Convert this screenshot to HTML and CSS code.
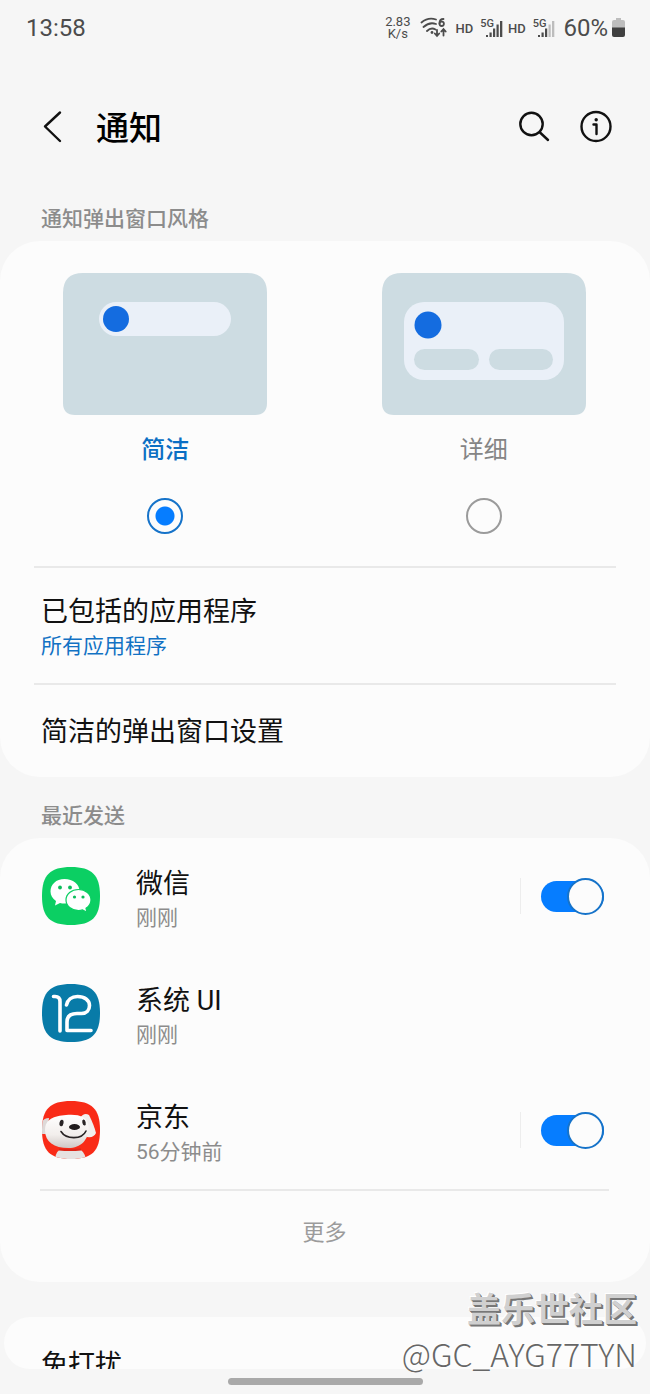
FILE: index.html
```html
<!DOCTYPE html>
<html lang="zh-CN">

<head>
	<meta charset="UTF-8">
	<meta name="viewport" content="width=device-width, initial-scale=1.0">
	<title>通知</title>
	<link rel="stylesheet" href="styles.css">
</head>

<body>
	<div class="screen">
		<div class="status-bar">
			<span class="clock">13:58</span>
			<div class="status-icons">
				<div class="net-speed">
					<span>2.83</span>
					<span>K/s</span>
				</div>
				<svg class="wifi" width="27" height="22" viewBox="0 0 27 22" fill="none" stroke="#4c4c4c" stroke-width="1.800" stroke-linecap="round">
					<path d="M1.500 5.500Q8 0 16 2.500M3.500 10Q9.500 4.500 16 7M7 14Q11 10 15.500 12.500" />
					<circle cx="12" cy="15.500" r="1.400" fill="#4c4c4c" stroke="none" />
					<path d="M23.500 2Q19.500 2 19.500 6.500" />
					<circle cx="21.700" cy="6.800" r="2.200" />
					<path d="M17 13v5.500M14.800 16.500l2.200 2.500 2.200-2.500M23.500 18.500v-6M21.300 14.500l2.200-2.500 2.200 2.500" />
				</svg>
				<span class="hd">HD</span>
				<span class="signal">
					<span class="gen">5G</span>
					<svg width="18" height="18" viewBox="0 0 18 18" fill="#4c4c4c">
						<path d="M1 15h2v2H1zM4.500 12.500h2.200V17H4.500zM8 8.500h2.200V17H8zM11.500 4.500h2.200V17h-2.200zM15 1h2.300v16H15z" />
					</svg>
				</span>
				<span class="hd">HD</span>
				<span class="signal">
					<span class="gen">5G</span>
					<svg width="18" height="18" viewBox="0 0 18 18" fill="#4c4c4c">
						<path d="M1 15h2v2H1zM4.500 12.500h2.200V17H4.500zM8 8.500h2.200V17H8z" />
						<path d="M11.500 4.500h2.200V17h-2.200zM15 1h2.300v16H15z" fill="#bdbdbd" />
					</svg>
				</span>
				<span class="percent">60%</span>
				<svg class="battery" width="13" height="20" viewBox="0 0 13 20">
					<path d="M4 0h5v2h2q2 0 2 2v6H0V4q0-2 2-2h2z" fill="#bdbdbd" />
					<path d="M0 9.500h13V17q0 2-2 2H2q-2 0-2-2z" fill="#404040" />
				</svg>
			</div>
		</div>

		<header class="header">
			<button class="icon-btn" type="button" aria-label="返回">
				<svg width="36" height="36" viewBox="0 0 36 36" fill="none" stroke="#111" stroke-width="2.400" stroke-linecap="round" stroke-linejoin="round">
					<path d="M25 3.500L10 17.500 25 32" />
				</svg>
			</button>
			<h1>通知</h1>
			<div class="actions">
				<button class="icon-btn" type="button" aria-label="搜索">
					<svg width="36" height="36" viewBox="0 0 36 36" fill="none" stroke="#111" stroke-width="2.400" stroke-linecap="round">
						<circle cx="15.500" cy="15" r="11.200" />
						<path d="M24 23.500l8 7.500" />
					</svg>
				</button>
				<button class="icon-btn" type="button" aria-label="信息">
					<svg width="36" height="36" viewBox="0 0 36 36" fill="none" stroke="#111" stroke-width="2.400" stroke-linecap="round">
						<circle cx="18" cy="17.500" r="14.500" />
						<path d="M15.500 15.500h3V25" stroke-linejoin="round" />
						<circle cx="18.200" cy="10.800" r="1.700" fill="#111" stroke="none" />
					</svg>
				</button>
			</div>
		</header>

		<main class="content">
			<h2 class="section-title">通知弹出窗口风格</h2>
			<section class="card">
				<div class="styles">
					<label class="style-option">
						<svg width="204" height="142" viewBox="0 0 204 142">
							<path d="M20 0H184Q204 0 204 20V130Q204 142 192 142H12Q0 142 0 130V20Q0 0 20 0Z" fill="#cddce2" />
							<rect x="36" y="29" width="132" height="34" rx="17" fill="#eaf0f8" />
							<circle cx="53" cy="46" r="13" fill="#146ce0" />
						</svg>
						<span class="style-name">简洁</span>
						<input type="radio" name="popup-style" checked>
					</label>
					<label class="style-option">
						<svg width="204" height="142" viewBox="0 0 204 142">
							<path d="M20 0H184Q204 0 204 20V130Q204 142 192 142H12Q0 142 0 130V20Q0 0 20 0Z" fill="#cddce2" />
							<rect x="22" y="29" width="160" height="78" rx="20" fill="#eaf0f8" />
							<circle cx="46" cy="52" r="13.500" fill="#146ce0" />
							<rect x="32" y="76" width="65" height="21" rx="10.500" fill="#cddce2" />
							<rect x="107" y="76" width="64" height="21" rx="10.500" fill="#cddce2" />
						</svg>
						<span class="style-name">详细</span>
						<input type="radio" name="popup-style">
					</label>
				</div>
				<a class="row" href="#">
					<span class="title">已包括的应用程序</span>
					<span class="sub link">所有应用程序</span>
				</a>
				<a class="row single" href="#">
					<span class="title">简洁的弹出窗口设置</span>
				</a>
			</section>

			<h2 class="section-title">最近发送</h2>
			<section class="card">
				<div class="app">
					<svg class="app-icon" width="58" height="58" viewBox="0 0 58 58">
						<path d="M29 0C50 0 58 8 58 29S50 58 29 58 0 50 0 29 8 0 29 0Z" fill="#0bcf63" />
						<path d="M22.500 12C14 12 8.500 17.500 8.500 24.500c0 4 2 7 5.500 9.500l-1 4.500 5-2.500q2 .5 4.500 .5C31 36.500 37.500 31 37.500 24S31 12 22.500 12Z" fill="#fff" />
						<path d="M36.500 22.500C29.500 22.500 24 27 24 33s5.500 10.500 12.500 10.500q2.200 0 4-.6l4.500 2.300-1-3.900c3-2 5-5 5-8.300 0-6-5.500-10.500-12.500-10.500Z" fill="#fff" stroke="#0bcf63" stroke-width="1.200" />
						<g fill="#0bbd5b">
							<circle cx="18" cy="20.500" r="1.900" />
							<circle cx="28" cy="20.500" r="1.900" />
							<circle cx="32.500" cy="30" r="1.600" />
							<circle cx="41" cy="30" r="1.600" />
						</g>
					</svg>
					<div class="app-text">
						<span class="title" id="app-wechat">微信</span>
						<span class="sub">刚刚</span>
					</div>
					<div class="toggle"><input type="checkbox" role="switch" aria-labelledby="app-wechat" checked></div>
				</div>
				<div class="app">
					<svg class="app-icon" width="58" height="58" viewBox="0 0 58 58">
						<path d="M29 0C50 0 58 8 58 29S50 58 29 58 0 50 0 29 8 0 29 0Z" fill="#087ba8" />
						<path d="M11.500 12.500H13q5 0 5 5V47M24.500 21c1-5 5-8.500 11-8.500 7 0 12 3.500 12 9 0 4.500-3 8-8 8H35c-7 0-10 3-10 8.500v8.500H49" fill="none" stroke="#fff" stroke-width="3.600" stroke-linecap="round" stroke-linejoin="round" />
					</svg>
					<div class="app-text">
						<span class="title">系统 UI</span>
						<span class="sub">刚刚</span>
					</div>
				</div>
				<div class="app">
					<svg class="app-icon" width="58" height="58" viewBox="0 0 58 58">
						<defs>
							<clipPath id="squircle">
								<path d="M29 0C50 0 58 8 58 29S50 58 29 58 0 50 0 29 8 0 29 0Z" />
							</clipPath>
							<linearGradient id="fur" x1="0" y1="0" x2="0" y2="1">
								<stop offset="0" stop-color="#fff" />
								<stop offset=".6" stop-color="#f2eeec" />
								<stop offset="1" stop-color="#cfc8c5" />
							</linearGradient>
						</defs>
						<g clip-path="url(#squircle)">
							<rect width="58" height="58" fill="#f92b17" />
							<path d="M13 58q1-9 7-10h16q6 1 8 10Z" fill="#e6e2e1" />
							<path d="M7 17Q0 17-1 25v8h6Z" fill="#ded9d8" />
							<path d="M38 17q4-6 9-3 5 10 7 18-2 5-9 4Z" fill="#f2efee" />
							<path d="M24 14C36 13 46 15 46.500 26c.5 13-8 21-20 21C12 47 3 41 3 29 3 18 12 15 24 14Z" fill="url(#fur)" />
							<path d="M17 48.500q11 1 22 0" fill="none" stroke="#dc2618" stroke-width="2" />
							<ellipse cx="19.500" cy="22" rx="2" ry="3.200" fill="#292425" transform="rotate(12 19.500 22)" />
							<ellipse cx="42" cy="21.500" rx="1.700" ry="3" fill="#292425" transform="rotate(-12 42 21.500)" />
							<ellipse cx="32.500" cy="26" rx="5.500" ry="3" fill="#211c1d" />
							<path d="M19 30.500c5 8 21 8.500 25-.5" fill="none" stroke="#292425" stroke-width="1.600" stroke-linecap="round" />
						</g>
					</svg>
					<div class="app-text">
						<span class="title" id="app-jd">京东</span>
						<span class="sub">56分钟前</span>
					</div>
					<div class="toggle"><input type="checkbox" role="switch" aria-labelledby="app-jd" checked></div>
				</div>
				<button class="more" type="button">更多</button>
			</section>

			<section class="card last">
				<a class="row dnd" href="#"><span class="title">免打扰</span></a>
			</section>
		</main>

		<div class="nav-bar"><span class="handle"></span></div>

		<div class="watermark">
			<span class="community">盖乐世社区</span>
			<span class="user">@GC_AYG77TYN</span>
		</div>
	</div>
</body>

</html>
```
FILE: styles.css
```css
* {
	box-sizing: border-box;
}

body {
	margin: 0;
	background-color: #f6f6f6;
	color: #111;
	font-family: Roboto, "Noto Sans CJK SC", sans-serif;
}

a {
	color: inherit;
	text-decoration: none;
}

button {
	background: none;
	border: none;
	padding: 0;
	font-family: inherit;
	cursor: pointer;
}

h1,
h2 {
	margin: 0;
}

.screen {
	position: relative;
	height: 100vh;
	display: flex;
	flex-direction: column;
	overflow: hidden;
}

/* status bar */
.status-bar {
	height: 56px;
	flex-shrink: 0;
	padding: 0 25px 0 26px;
	display: flex;
	align-items: center;
	justify-content: space-between;
	color: #4c4c4c;
}

.clock,
.percent {
	font-size: 24px;
}

.status-icons {
	display: flex;
	align-items: center;
}

.net-speed {
	display: flex;
	flex-direction: column;
	align-items: center;
	font-size: 13px;
	line-height: 12px;
}

.wifi {
	margin: 0 9px 0 9px;
}

.hd {
	font-size: 13px;
	font-weight: 500;
}

.signal {
	display: flex;
	align-items: flex-end;
	margin: 0 5px 0 7px;
}

.gen {
	font-size: 11px;
	font-weight: 500;
	line-height: 12px;
	align-self: flex-start;
	margin-right: -9px;
}

.signal svg {
	margin-top: 2px;
}

.percent {
	margin: 0 4px 0 3px;
}

/* title bar */
.header {
	flex-shrink: 0;
	padding: 45px 36px 27px 35px;
	display: flex;
	align-items: center;
}

.header h1 {
	margin-left: 25px;
	padding-top: 4px;
	font-size: 33px;
	font-weight: 500;
	line-height: 48px;
	color: #000;
}

.icon-btn {
	width: 36px;
	height: 36px;
}

.actions {
	margin-left: auto;
	display: flex;
	gap: 26px;
}

.content {
	flex: 1;
	min-height: 0;
	display: flex;
	flex-direction: column;
}

.section-title {
	padding: 24px 41px 7px;
	font-size: 21px;
	font-weight: 500;
	line-height: 30px;
	color: #8c8c8c;
}

.card {
	flex-shrink: 0;
	background-color: #fcfcfc;
	border-radius: 40px;
}

/* popup style picker */
.styles {
	display: grid;
	grid-template-columns: 1fr 1fr;
	padding: 32px 7px 32px 6px;
}

.style-option {
	display: flex;
	flex-direction: column;
	align-items: center;
	cursor: pointer;
}

.style-name {
	margin: 18px 0 31px;
	font-size: 24px;
	line-height: 34px;
	color: #858585;
}

.style-option:has(input:checked) .style-name {
	color: #0b6fc4;
	font-weight: 500;
}

input[type="radio"] {
	appearance: none;
	width: 36px;
	height: 36px;
	margin: 0;
	border: 2px solid #9b9b9b;
	border-radius: 50%;
}

input[type="radio"]:checked {
	border-color: #1673c9;
	background: radial-gradient(circle, #067dff 9px, transparent 10px);
}

/* list rows */
.row {
	display: flex;
	flex-direction: column;
	margin: 0 34px;
	padding: 26px 7px 21px;
	border-top: 2px solid #e9e9e9;
}

.row.single {
	padding-top: 29px;
	padding-bottom: 27px;
}

.title {
	font-size: 27px;
	line-height: 36px;
	color: #111;
}

.sub {
	font-size: 21px;
	line-height: 32px;
	color: #8c8c8c;
}

.sub.link {
	color: #1272c4;
}

/* recently sent */
.app {
	display: flex;
	align-items: center;
	padding: 20px 46px 21px 42px;
}

.app-text {
	display: flex;
	flex-direction: column;
	flex: 1;
	margin-left: 36px;
	padding-top: 8px;
}

.toggle {
	height: 36px;
	padding-left: 20px;
	display: flex;
	align-items: center;
	border-left: 1px solid #ededed;
}

.toggle input {
	appearance: none;
	position: relative;
	width: 63px;
	height: 31px;
	margin: 0;
	border-radius: 16px;
	background-color: #067dff;
	cursor: pointer;
}

.toggle input::after {
	content: "";
	position: absolute;
	top: -3px;
	right: 0;
	width: 37px;
	height: 37px;
	box-sizing: border-box;
	border: 2px solid #1673c9;
	border-radius: 50%;
	background-color: #fcfcfc;
}

.more {
	display: block;
	width: calc(100% - 81px);
	margin: 0 41px 0 40px;
	padding: 25px 0 32px;
	border-top: 2px solid #e9e9e9;
	font-size: 22px;
	line-height: 34px;
	color: #9b9b9b;
}

/* cut off by the bottom of the list */
.card.last {
	flex: 1 1 0;
	min-height: 0;
	margin: 35px 4px 0;
	overflow: hidden;
}

.row.dnd {
	margin: 0;
	padding: 30px 37px;
	border-top: none;
}

.nav-bar {
	flex-shrink: 0;
	height: 25px;
	display: flex;
	align-items: center;
	justify-content: center;
}

.handle {
	width: 30%;
	height: 7px;
	border-radius: 4px;
	background-color: #a9a9a9;
}

.watermark {
	position: absolute;
	right: 13px;
	bottom: 19px;
	display: flex;
	flex-direction: column;
	align-items: flex-end;
	font-family: "Noto Sans CJK SC", sans-serif;
	pointer-events: none;
}

.community {
	font-size: 34px;
	font-weight: 700;
	line-height: 46px;
	color: #d0d0d0;
	text-shadow: 1px 1px 0 #777, 2px 2px 0 #777, -1px -1px 0 #fff;
}

.user {
	font-size: 32px;
	font-weight: 300;
	line-height: 44px;
	color: #666;
	text-shadow: -1px -1px 0 #fff;
}
```
